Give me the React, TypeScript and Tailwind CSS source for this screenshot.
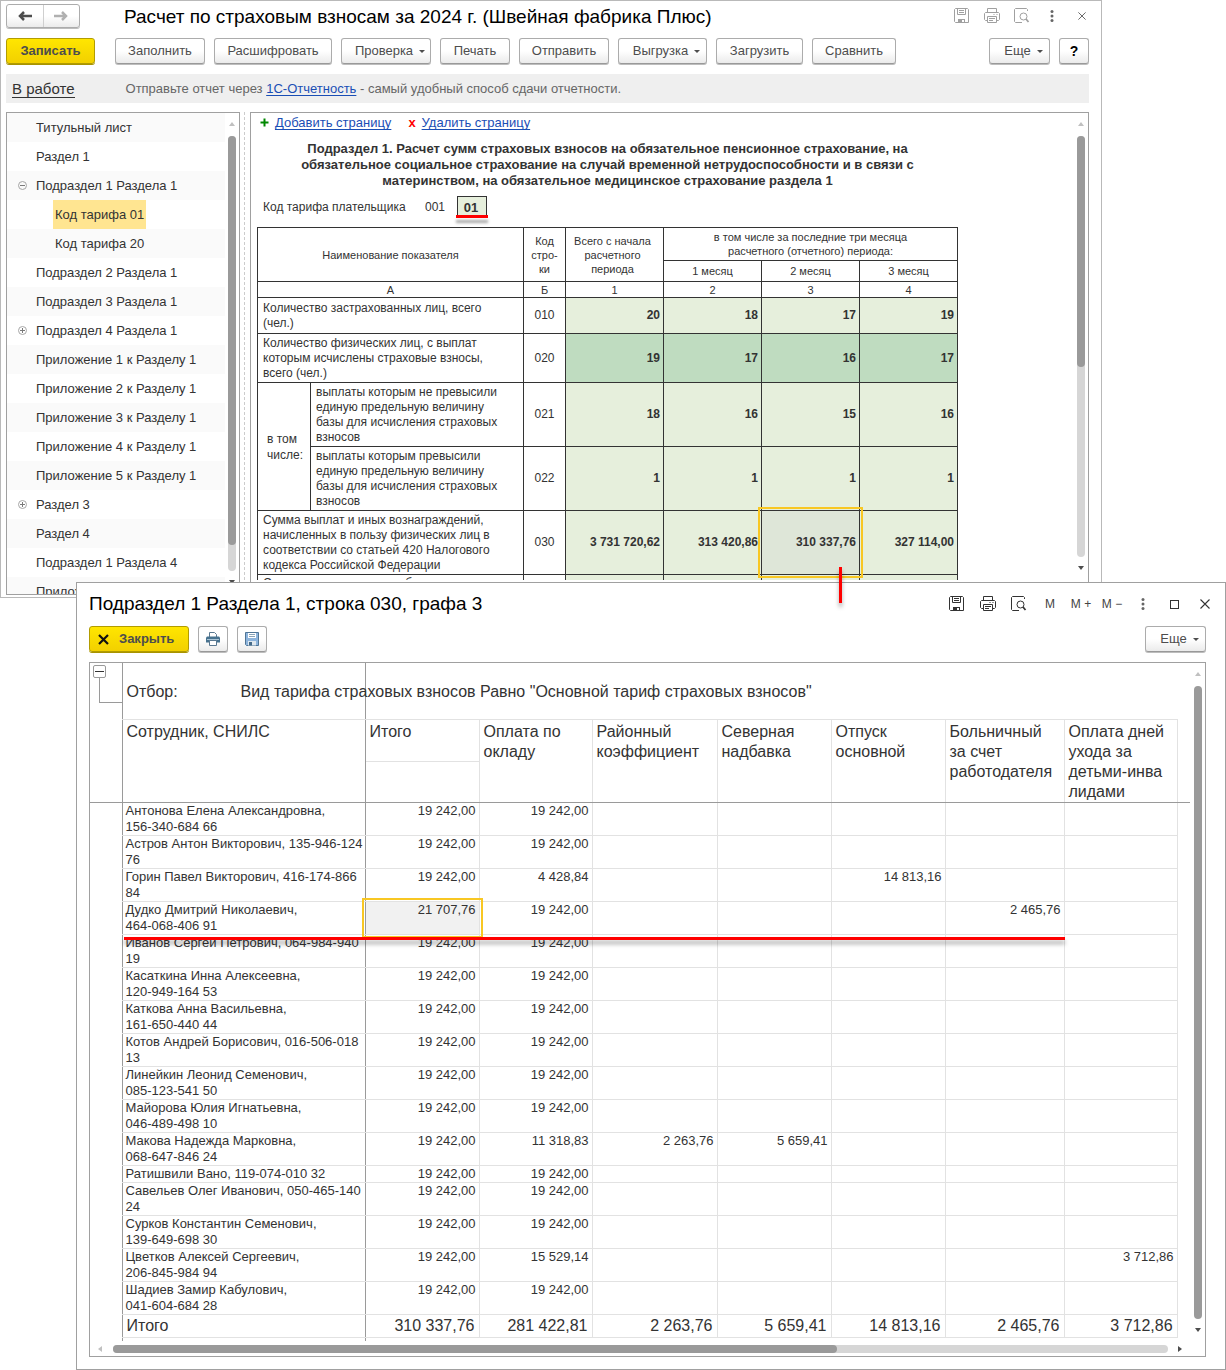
import { type ReactNode } from "react";

const tree: { label: string; child?: boolean; active?: boolean; mark?: "plus" | "minus" }[] = [
  { label: "Титульный лист" },
  { label: "Раздел 1" },
  { label: "Подраздел 1 Раздела 1", mark: "minus" },
  { label: "Код тарифа 01", child: true, active: true },
  { label: "Код тарифа 20", child: true },
  { label: "Подраздел 2 Раздела 1" },
  { label: "Подраздел 3 Раздела 1" },
  { label: "Подраздел 4 Раздела 1", mark: "plus" },
  { label: "Приложение 1 к Разделу 1" },
  { label: "Приложение 2 к Разделу 1" },
  { label: "Приложение 3 к Разделу 1" },
  { label: "Приложение 4 к Разделу 1" },
  { label: "Приложение 5 к Разделу 1" },
  { label: "Раздел 3", mark: "plus" },
  { label: "Раздел 4" },
  { label: "Подраздел 1 Раздела 4" },
  { label: "Приложение 1 к Разделу 4" },
];

const employees: { name: string; id: string; short?: boolean; v: string[]; selected?: boolean }[] = [
  { name: "Антонова Елена Александровна,", id: "156-340-684 66", v: ["19 242,00", "19 242,00", "", "", "", "", ""] },
  { name: "Астров Антон Викторович, 135-946-124", id: "76", v: ["19 242,00", "19 242,00", "", "", "", "", ""] },
  { name: "Горин Павел Викторович, 416-174-866", id: "84", v: ["19 242,00", "4 428,84", "", "", "14 813,16", "", ""] },
  { name: "Дудко Дмитрий Николаевич,", id: "464-068-406 91", v: ["21 707,76", "19 242,00", "", "", "", "2 465,76", ""], selected: true },
  { name: "Иванов Сергей Петрович, 064-984-940", id: "19", v: ["19 242,00", "19 242,00", "", "", "", "", ""] },
  { name: "Касаткина Инна Алексеевна,", id: "120-949-164 53", v: ["19 242,00", "19 242,00", "", "", "", "", ""] },
  { name: "Каткова Анна Васильевна,", id: "161-650-440 44", v: ["19 242,00", "19 242,00", "", "", "", "", ""] },
  { name: "Котов Андрей Борисович, 016-506-018", id: "13", v: ["19 242,00", "19 242,00", "", "", "", "", ""] },
  { name: "Линейкин Леонид Семенович,", id: "085-123-541 50", v: ["19 242,00", "19 242,00", "", "", "", "", ""] },
  { name: "Майорова Юлия Игнатьевна,", id: "046-489-498 10", v: ["19 242,00", "19 242,00", "", "", "", "", ""] },
  { name: "Макова Надежда Марковна,", id: "068-647-846 24", v: ["19 242,00", "11 318,83", "2 263,76", "5 659,41", "", "", ""] },
  { name: "Ратишвили Вано, 119-074-010 32", id: "", short: true, v: ["19 242,00", "19 242,00", "", "", "", "", ""] },
  { name: "Савельев Олег Иванович, 050-465-140", id: "24", v: ["19 242,00", "19 242,00", "", "", "", "", ""] },
  { name: "Сурков Константин Семенович,", id: "139-649-698 30", v: ["19 242,00", "19 242,00", "", "", "", "", ""] },
  { name: "Цветков Алексей Сергеевич,", id: "206-845-984 94", v: ["19 242,00", "15 529,14", "", "", "", "", "3 712,86"] },
  { name: "Шадиев Замир Кабулович,", id: "041-604-684 28", v: ["19 242,00", "19 242,00", "", "", "", "", ""] },
];

const totals = ["310 337,76", "281 422,81", "2 263,76", "5 659,41", "14 813,16", "2 465,76", "3 712,86"];
const columns = [
  ["Оплата по", "окладу"],
  ["Районный", "коэффициент"],
  ["Северная", "надбавка"],
  ["Отпуск", "основной"],
  ["Больничный", "за счет", "работодателя"],
  ["Оплата дней", "ухода за", "детьми-инва", "лидами"],
];

function Caret() {
  return (
    <svg width="6" height="3" viewBox="0 0 6 3" className="mt-px shrink-0" aria-hidden="true">
      <path d="M0 0h6L3 3z" fill="#4d4d4d" />
    </svg>
  );
}

function Btn({ children, width, menu, label }: { children: ReactNode; width: string; menu?: boolean; label?: string }) {
  return (
    <button
      type="button"
      aria-label={label}
      className={
        "flex h-[26px] shrink-0 items-center justify-center gap-1.5 rounded-[3px] border border-[#acacac] border-b-[#999] bg-linear-to-b from-white from-50% to-[#ebebeb] text-[13px] text-[#4d4d4d] shadow-[0_1px_0_#bdbdbd] " +
        width +
        (menu ? " pl-2" : "")
      }
    >
      {children}
      {menu && <Caret />}
    </button>
  );
}

function Arrow({ dir, off }: { dir: "up" | "down" | "left" | "right"; off?: boolean }) {
  const d = { up: "M0 5h6L3 1z", down: "M0 1h6L3 5z", left: "M4 0v6L0 3z", right: "M1 0v6L5 3z" }[dir];
  return (
    <svg width="6" height="6" viewBox="0 0 6 6" className="shrink-0" aria-hidden="true">
      <path d={d} fill={off ? "#c0c0c0" : "#4d4d4d"} />
    </svg>
  );
}

function SaveIcon({ color }: { color: string }) {
  return (
    <svg width="16" height="16" viewBox="0 0 16 16" fill="none" stroke={color} aria-hidden="true">
      <path d="M1.5.5h12l1 1v13h-13l-1-1v-12z" />
      <path d="M3.5.5v6h8v-6M5 2.500h5M5 4.500h5" />
      <path d="M4 11h7v4H4z" fill={color} stroke="none" />
      <path d="M8 12h2v2H8z" fill="#fff" stroke="none" />
    </svg>
  );
}

function PrintIcon({ color }: { color: string }) {
  return (
    <svg width="16" height="16" viewBox="0 0 16 16" fill="none" stroke={color} aria-hidden="true">
      <path d="M3.500 4V.5h9V4M3 12.500H1.500l-1-1v-6l1-1h13l1 1v6l-1 1H13" />
      <path d="M3.500 8.500h9v6h-9zM5 10.500h6M5 12.500h4M9.500 6.500h1M12.500 6.500h1" />
    </svg>
  );
}

function PreviewIcon({ color }: { color: string }) {
  return (
    <svg width="16" height="16" viewBox="0 0 16 16" fill="none" stroke={color} aria-hidden="true">
      <path d="M13.500 3V1.500l-1-1h-11l-1 1v12l1 1H8" />
      <circle cx="9.500" cy="8.500" r="3.500" />
      <path d="M12 11l2.500 3" strokeWidth="1.800" />
    </svg>
  );
}

function Dots({ color }: { color: string }) {
  return (
    <svg width="4" height="12" viewBox="0 0 4 12" fill={color} aria-hidden="true">
      <circle cx="2" cy="1.500" r="1.500" />
      <circle cx="2" cy="6" r="1.500" />
      <circle cx="2" cy="10.500" r="1.500" />
    </svg>
  );
}

function Cross({ size, color }: { size: number; color: string }) {
  return (
    <svg width={size} height={size} viewBox="0 0 10 10" stroke={color} strokeWidth="1.100" aria-hidden="true">
      <path d="M.5.5l9 9M9.500.5l-9 9" />
    </svg>
  );
}

function IconBtn({ label, children }: { label: string; children: ReactNode }) {
  return (
    <button type="button" aria-label={label} className="flex h-5 w-[30px] items-center justify-center">
      {children}
    </button>
  );
}

function TreeMark({ kind }: { kind: "plus" | "minus" }) {
  return (
    <svg width="9" height="9" viewBox="0 0 9 9" fill="none" stroke="#a6a6a6" aria-hidden="true">
      <circle cx="4.500" cy="4.500" r="4" />
      <path d={kind === "plus" ? "M2 4.500h5M4.500 2v5" : "M2 4.500h5"} stroke="#7a7a7a" />
    </svg>
  );
}

function FormRow({ code, height, values, dark, selected, children }: { code: string; height: string; values: string[]; dark?: boolean; selected?: boolean; children: ReactNode }) {
  return (
    <tr className={height}>
      {children}
      <td className="border border-[#333] text-center">{code}</td>
      {values.map((v, i) => (
        <td
          key={i}
          className={"relative border border-[#333] pr-[3px] text-right font-bold " + (selected && i === 2 ? "bg-[#dee6d8]" : dark ? "bg-[#bfdcc0]" : "bg-[#e6efdc]")}
        >
          {v}
          {selected && i === 2 && <span className="absolute -inset-1 z-10 border-2 border-[#f8c723]" />}
        </td>
      ))}
    </tr>
  );
}

const labelCell = "border border-[#333] pl-[5px] text-left font-normal leading-[15px]";
const headCell = "border border-[#333] font-normal";

function ReportWindow() {
  return (
    <section className="mr-[124px] border border-[#b9b9b9] bg-white pr-3 pb-0.5 pl-[5px]">
      <header className="flex h-[37px] items-start pt-[3px]">
        <div className="flex h-6 w-[74px] rounded-[3px] border border-[#acacac] bg-linear-to-b from-white from-50% to-[#ebebeb] shadow-[0_1px_0_#bdbdbd]">
          <button type="button" aria-label="Назад" className="flex flex-1 items-center justify-center border-r border-[#cfcfcf]">
            <svg width="14" height="10" viewBox="0 0 14 10" fill="none" stroke="#4d4d4d" strokeWidth="2.500"><path d="M14 5H2M6 1L2 5l4 4" /></svg>
          </button>
          <button type="button" aria-label="Вперед" className="flex flex-1 items-center justify-center">
            <svg width="14" height="10" viewBox="0 0 14 10" fill="none" stroke="#b0b0b0" strokeWidth="2.500"><path d="M0 5h12M8 1l4 4-4 4" /></svg>
          </button>
        </div>
        <h1 className="ml-11 flex-1 pt-px text-[19px] leading-6 whitespace-nowrap text-black">Расчет по страховым взносам за 2024 г. (Швейная фабрика Плюс)</h1>
        <div className="-mr-2 flex pt-0.5">
          <IconBtn label="Сохранить"><SaveIcon color="#a0a0a0" /></IconBtn>
          <IconBtn label="Печать"><PrintIcon color="#a0a0a0" /></IconBtn>
          <IconBtn label="Просмотр"><PreviewIcon color="#a0a0a0" /></IconBtn>
          <IconBtn label="Меню"><Dots color="#666" /></IconBtn>
          <IconBtn label="Закрыть окно"><Cross size={8} color="#555" /></IconBtn>
        </div>
      </header>

      <div className="flex h-9 items-start gap-[9px]">
        <button type="button" className="mr-[11px] h-[26px] w-[89px] rounded-[3px] border border-[#b29c00] bg-linear-to-b from-[#ffe600] to-[#f2d000] text-[13px] font-bold text-[#4d4d4d] shadow-[0_1px_0_#a89300]">Записать</button>
        <Btn width="w-[90px]">Заполнить</Btn>
        <Btn width="w-[118px]">Расшифровать</Btn>
        <Btn width="w-[90px]" menu>Проверка</Btn>
        <Btn width="w-[70px]">Печать</Btn>
        <Btn width="w-[90px]">Отправить</Btn>
        <Btn width="w-[89px]" menu>Выгрузка</Btn>
        <Btn width="w-[87px]">Загрузить</Btn>
        <Btn width="w-[84px]">Сравнить</Btn>
        <span className="flex-1" />
        <Btn width="w-[61px]" menu>Еще</Btn>
        <Btn width="w-[30px]" label="Справка"><span className="text-[14px] font-bold text-black">?</span></Btn>
      </div>

      <div className="flex h-[29px] items-center bg-[#efefef] pl-1.5 text-[13px] text-[#666]">
        <a href="#status" className="mt-px mr-[51px] border-b border-[#333] text-[15px] leading-4 text-[#333]">В работе</a>
        <p>Отправьте отчет через <a href="#report" className="text-[#1a4eb5] underline underline-offset-2">1С-Отчетность</a> - самый удобный способ сдачи отчетности.</p>
      </div>

      <div className="mt-[9px] flex h-[483px]">
        <nav className="flex w-[234px] shrink-0 overflow-hidden border border-[#a0a0a0]" aria-label="Разделы отчета">
          <ul className="min-w-0 flex-1 text-[13px] text-[#333]">
            {tree.map((t, i) => (
              <li key={t.label} className={"flex h-[29px] items-center " + (i % 2 ? "bg-white" : "bg-[#fafafa]")}>
                <span className="flex w-[29px] shrink-0 justify-center pl-0.5">{t.mark && <TreeMark kind={t.mark} />}</span>
                <a href={"#s" + i} className={"flex h-full items-center whitespace-nowrap " + (t.child ? "ml-[17px] px-0.5 " : "") + (t.active ? "bg-[#ffe591]" : "")}>{t.label}</a>
              </li>
            ))}
          </ul>
          <div className="flex w-[14px] flex-col items-center pt-2">
            <Arrow dir="up" off />
            <div className="mt-[9px] h-[435px] w-2 rounded-full bg-[#d6d6d6]"><div className="h-[409px] rounded-full bg-[#9a9a9a]" /></div>
            <div className="mt-2"><Arrow dir="down" /></div>
          </div>
        </nav>
        <div className="ml-1 w-1.5 border-l border-dashed border-[#ccc]" />
        <div className="flex min-w-0 flex-1 border border-[#a0a0a0]">
          <div className="h-[467px] min-w-0 flex-1 overflow-hidden pl-1.5 text-[12px] text-[#333]">
            <div className="flex h-5 items-center pl-[3px] text-[13px]">
              <svg width="9" height="9" viewBox="0 0 9 9" fill="#080" className="mr-1.5 mb-0.5"><path d="M3.500.5h2v3h3v2h-3v3h-2v-3h-3v-2h3z" /></svg>
              <a href="#add" className="text-[#1a4eb5] underline underline-offset-2">Добавить страницу</a>
              <span className="mr-1.5 ml-[17px] font-bold text-[#f00]">x</span>
              <a href="#del" className="text-[#1a4eb5] underline underline-offset-2">Удалить страницу</a>
            </div>
            <h2 className="mt-2 w-[701px] text-center text-[13px] leading-4 font-bold">
              Подраздел 1. Расчет сумм страховых взносов на обязательное пенсионное страхование, на<br />
              обязательное социальное страхование на случай временной нетрудоспособности и в связи с<br />
              материнством, на обязательное медицинское страхование раздела 1
            </h2>
            <div className="mt-[7px] flex h-[22px] items-center pl-1.5">
              <label htmlFor="tariff" className="w-[162px]">Код тарифа плательщика</label>
              <span className="w-8">001</span>
              <span className="relative">
                <input id="tariff" defaultValue="01" className="block h-[22px] w-[30px] border border-[#333] bg-[#e6efdc] pr-0.5 text-center text-[13px] font-bold" />
                <span className="absolute -right-px bottom-0 -left-px h-[3px] bg-[#f00] shadow-[0_5px_3px_#00000059]" />
              </span>
            </div>
            <table className="mt-[9px] w-[701px] table-fixed border-collapse leading-[15px]">
              <colgroup>
                <col className="w-[53px]" /><col className="w-[213px]" /><col className="w-[42px]" />
                <col className="w-[98px]" /><col className="w-[98px]" /><col className="w-[98px]" /><col className="w-[98px]" />
              </colgroup>
              <thead className="text-[11px] leading-[14px]">
                <tr className="h-[33px]">
                  <th colSpan={2} rowSpan={2} className={headCell}>Наименование показателя</th>
                  <th rowSpan={2} className={headCell}>Код<br />стро-<br />ки</th>
                  <th rowSpan={2} className={headCell + " pr-1"}>Всего с начала<br />расчетного<br />периода</th>
                  <th colSpan={3} className={headCell}>в том числе за последние три месяца<br />расчетного (отчетного) периода:</th>
                </tr>
                <tr className="h-[21px]">
                  <th className={headCell}>1 месяц</th><th className={headCell}>2 месяц</th><th className={headCell}>3 месяц</th>
                </tr>
                <tr className="h-4">
                  <th colSpan={2} className={headCell}>А</th>
                  {["Б", "1", "2", "3", "4"].map((t) => <th key={t} className={headCell}>{t}</th>)}
                </tr>
              </thead>
              <tbody>
                <FormRow code="010" height="h-[36px]" values={["20", "18", "17", "19"]}>
                  <th colSpan={2} className={labelCell}>Количество застрахованных лиц, всего<br />(чел.)</th>
                </FormRow>
                <FormRow code="020" height="h-[49px]" values={["19", "17", "16", "17"]} dark>
                  <th colSpan={2} className={labelCell}>Количество физических лиц, с выплат<br />которым исчислены страховые взносы,<br />всего (чел.)</th>
                </FormRow>
                <FormRow code="021" height="h-[64px]" values={["18", "16", "15", "16"]}>
                  <th rowSpan={2} className="border border-[#333] pl-[9px] text-left leading-4 font-normal">в том<br />числе:</th>
                  <th className={labelCell}>выплаты которым не превысили<br />единую предельную величину<br />базы для исчисления страховых<br />взносов</th>
                </FormRow>
                <FormRow code="022" height="h-[64px]" values={["1", "1", "1", "1"]}>
                  <th className={labelCell}>выплаты которым превысили<br />единую предельную величину<br />базы для исчисления страховых<br />взносов</th>
                </FormRow>
                <FormRow code="030" height="h-[64px]" values={["3 731 720,62", "313 420,86", "310 337,76", "327 114,00"]} selected>
                  <th colSpan={2} className={labelCell}>Сумма выплат и иных вознаграждений,<br />начисленных в пользу физических лиц в<br />соответствии со статьей 420 Налогового<br />кодекса Российской Федерации</th>
                </FormRow>
                <FormRow code="" height="h-4" values={["", "", "", ""]}>
                  <th colSpan={2} className={labelCell + " pt-px"}>Сумма, не подлежащая обложению</th>
                </FormRow>
              </tbody>
            </table>
          </div>
          <div className="flex w-[15px] flex-col items-center pt-2">
            <Arrow dir="up" off />
            <div className="mt-[9px] h-[421px] w-2 rounded-full bg-[#d6d6d6]"><div className="h-[231px] rounded-full bg-[#9a9a9a]" /></div>
            <div className="mt-2"><Arrow dir="down" /></div>
          </div>
        </div>
      </div>
    </section>
  );
}

const line = "border border-[#e2e2e2]";
const edge = " border-x-[#9a9a9a]";

function DetailTable() {
  return (
    <table className="w-[1100px] table-fixed border-collapse text-[#333]">
      <colgroup>
        <col className="w-[32px]" /><col className="w-[243px]" /><col className="w-[114px]" /><col className="w-[113px]" />
        <col className="w-[125px]" /><col className="w-[114px]" /><col className="w-[114px]" /><col className="w-[119px]" />
        <col className="w-[113px]" /><col className="w-[13px]" />
      </colgroup>
      <thead className="text-[16px] leading-5">
        <tr className="h-[56px]">
          <td rowSpan={2} className="border-b border-[#9a9a9a] p-0 align-top">
            <div className="flex flex-col pl-[3px] pt-0.5">
              <button type="button" aria-label="Свернуть" className="flex h-[13px] w-[13px] items-center justify-center rounded-[2px] border border-[#9a9a9a] bg-white"><span className="h-px w-[9px] bg-[#333]" /></button>
              <span className="ml-1.5 h-[25px] w-[23px] border-b border-l border-[#9a9a9a]" />
            </div>
          </td>
          <td className="border-x border-b border-x-[#9a9a9a] border-b-[#e2e2e2] p-0 pt-0.5 pl-1">
            <div className="flex whitespace-nowrap"><span className="w-[114px] shrink-0">Отбор:</span><span className="w-0">Вид тарифа страховых взносов Равно "Основной тариф страховых взносов"</span></div>
          </td>
          <td colSpan={7} className="border-b border-[#e2e2e2]" />
          <td />
        </tr>
        <tr className="h-[83px] text-left align-top">
          <th className={line + edge + " border-b-[#9a9a9a] pt-0.5 pl-1 font-normal"}>Сотрудник, СНИЛС</th>
          <th className="border-r border-b border-r-[#e2e2e2] border-b-[#9a9a9a] p-0 font-normal"><div className="h-[42px] border-b border-[#e2e2e2] pt-0.5 pl-1">Итого</div></th>
          {columns.map((c) => (
            <th key={c[0]} className={line + " border-b-[#9a9a9a] pt-0.5 pl-1 font-normal whitespace-nowrap"}>
              {c.map((l) => <span key={l} className="block">{l}</span>)}
            </th>
          ))}
          <td className="border-b border-[#9a9a9a]" />
        </tr>
      </thead>
      <tbody className="text-[13px] leading-4">
        {employees.map((e) => (
          <tr key={e.name} className={"align-top " + (e.short ? "h-[17px]" : "h-[33px]")}>
            <td />
            <th className={line + edge + " relative p-0 pl-[3px] text-left font-normal whitespace-nowrap"}>
              {e.name}{e.id && <br />}{e.id}
              {e.selected && <span className="absolute top-[35px] left-px z-20 h-[3px] w-[941px] bg-[#f00] shadow-[0_4px_4px_#00000059]" />}
            </th>
            {e.v.map((v, i) => (
              <td key={i} className={line + " relative p-0 pr-[3px] text-right" + (i === 0 ? " border-l-[#9a9a9a]" : "") + (e.selected && i === 0 ? " bg-[#f1f1f1]" : "")}>
                {v}
                {e.selected && i === 0 && <span className="absolute -inset-1 z-10 border-2 border-[#f8c723]" />}
              </td>
            ))}
            <td />
          </tr>
        ))}
      </tbody>
      <tfoot className="text-[16px] leading-5">
        <tr className="h-[23px]">
          <td />
          <th className={line + edge + " p-0 pl-1 text-left font-normal"}>Итого</th>
          {totals.map((t, i) => <td key={i} className={line + " p-0 pr-1 text-right" + (i === 0 ? " border-l-[#9a9a9a]" : "")}>{t}</td>)}
          <td />
        </tr>
        <tr className="h-1">
          <td className="p-0" />
          <td className="border-x border-[#9a9a9a] p-0" />
          <td colSpan={8} className="p-0" />
        </tr>
      </tfoot>
    </table>
  );
}

function DetailWindow() {
  return (
    <section className="relative z-10 -mt-4 ml-[76px] border border-[#a0a0a0] bg-white px-3 pb-3 text-[#333]">
      <span className="absolute -top-4 left-[762px] h-9 w-[3px] bg-[#f00] shadow-[0_4px_4px_#00000059]" />
      <header className="flex h-[43px] items-start pt-2">
        <h2 className="flex-1 pt-px text-[19px] leading-6 whitespace-nowrap text-black">Подраздел 1 Раздела 1, строка 030, графа 3</h2>
        <div className="-mr-[7px] flex gap-px pt-[3px] text-[12px] text-[#444]">
          <IconBtn label="Сохранить"><SaveIcon color="#333" /></IconBtn>
          <IconBtn label="Печать"><PrintIcon color="#333" /></IconBtn>
          <IconBtn label="Просмотр"><PreviewIcon color="#333" /></IconBtn>
          <IconBtn label="Память">M</IconBtn>
          <IconBtn label="Прибавить">M +</IconBtn>
          <IconBtn label="Вычесть">M −</IconBtn>
          <IconBtn label="Меню"><Dots color="#666" /></IconBtn>
          <IconBtn label="Развернуть"><span className="h-[9px] w-[9px] border border-[#333]" /></IconBtn>
          <IconBtn label="Закрыть окно"><Cross size={10} color="#333" /></IconBtn>
        </div>
      </header>
      <div className="mr-[7px] flex h-9 items-start gap-[9px]">
        <button type="button" className="flex h-[26px] w-[100px] items-center gap-2.5 rounded-[3px] border border-[#b29c00] bg-linear-to-b from-[#ffe600] to-[#f2d000] pl-2 text-[13px] font-bold text-[#4d4d4d] shadow-[0_1px_0_#a89300]">
          <svg width="11" height="11" viewBox="0 0 11 11" stroke="#111" strokeWidth="2.200" aria-hidden="true"><path d="M1 1l9 9M10 1l-9 9" /></svg>
          Закрыть
        </button>
        <Btn width="w-[30px]" label="Печать">
          <svg width="14" height="14" viewBox="0 0 14 14" aria-hidden="true">
            <path d="M3.500 5V.5h5l2 2V5" fill="#fff" stroke="#5a7890" />
            <path d="M1 4.500h12l1 1v5H0v-5z" fill="#47728f" />
            <path d="M1 7h12v1H1z" fill="#a9c4d6" />
            <path d="M3.500 8.500h7v5h-7z" fill="#fff" stroke="#5a7890" />
          </svg>
        </Btn>
        <Btn width="w-[30px]" label="Сохранить">
          <svg width="14" height="14" viewBox="0 0 14 14" aria-hidden="true">
            <path d="M.5.5h13v13h-12l-1-1z" fill="#8db4dc" stroke="#4f7596" />
            <path d="M3 1h8v5H3z" fill="#fff" /><path d="M4 2.500h6M4 4.500h6" stroke="#8aa4b8" />
            <path d="M3 9h8v4.500H3z" fill="#dfe8ef" /><path d="M4 10h3v3.500H4z" fill="#456a88" />
          </svg>
        </Btn>
        <span className="flex-1" />
        <Btn width="w-[61px]" menu>Еще</Btn>
      </div>
      <div className="mr-[7px] border border-[#a0a0a0]">
        <div className="flex">
          <div className="min-w-0 flex-1 overflow-hidden"><DetailTable /></div>
          <div className="flex w-[14px] flex-col items-center pt-2">
            <Arrow dir="up" off />
            <div className="mt-[9px] h-[633px] w-2 rounded-full bg-[#9a9a9a]" />
            <div className="mt-2"><Arrow dir="down" /></div>
          </div>
        </div>
        <div className="flex h-[15px] items-center pr-[22px] pl-2">
          <Arrow dir="left" off />
          <div className="mx-[9px] h-2 flex-1 rounded-full bg-[#d6d6d6]"><div className="h-2 w-[724px] rounded-full bg-[#9a9a9a]" /></div>
          <Arrow dir="right" />
        </div>
      </div>
    </section>
  );
}

export default function App() {
  return (
    <main className="bg-white font-['Liberation_Sans',Arial,sans-serif]">
      <ReportWindow />
      <DetailWindow />
    </main>
  );
}
